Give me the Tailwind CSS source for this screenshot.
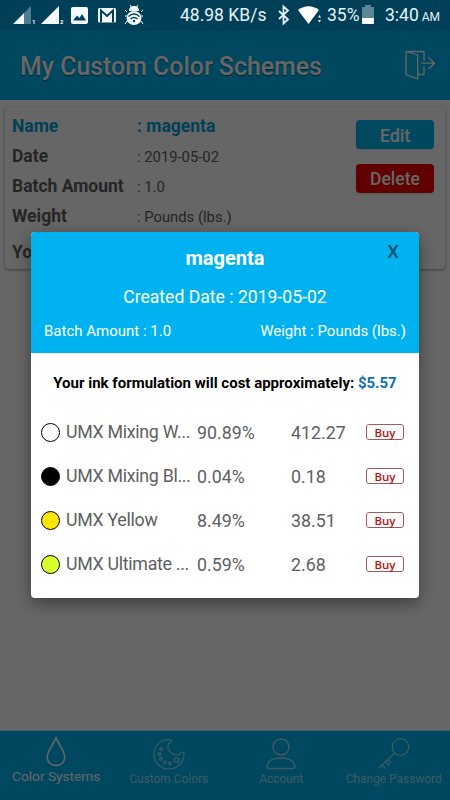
<!DOCTYPE html>
<html lang="en">
<head>
    <meta charset="UTF-8">
    <meta name="viewport" content="width=device-width, initial-scale=1.0">
    <title>My Custom Color Schemes</title>
    <script src="https://cdn.jsdelivr.net/npm/@tailwindcss/browser@4"></script>
</head>
<body class="font-[Roboto,sans-serif]">
    <div class="relative w-[450px] h-[800px] flex flex-col overflow-hidden bg-white whitespace-nowrap">
        <!-- Header -->
        <header class="h-[100px] pt-[32px] pl-5 pr-[14px] flex items-center justify-between bg-[#00b3f0] text-white">
            <h1 class="pt-[2px] text-[24.9px] leading-8 font-medium [text-shadow:0_1px_1px_#0008]">My Custom Color Schemes</h1>
            <svg class="w-8 h-8" viewBox="0 0 32 32" fill="none" stroke="currentColor" stroke-width="1.3" stroke-linejoin="round">
                <path d="M2 1.5H20V10.5M20 16.5V24.5H14M2 1.5V24.7L13.7 29V5L2 1.5M17 13.2H30.5M24.5 7.5L30.5 13.2L24.5 19" />
            </svg>
        </header>

        <!-- Scheme card -->
        <main class="flex-1 pt-[7px] px-[5px]">
            <div class="h-[162px] flex justify-between rounded-sm bg-white shadow-[0_1px_3px_#0006] pl-[7px] pr-[11px] pt-1 text-[#5c5c5c]">
                <div class="grid grid-cols-[125px_auto] auto-rows-[30px] items-center">
                    <span class="text-[17.5px] font-bold text-[#00a0d4]">Name</span>
                    <span class="text-[17.5px] font-bold text-[#00a0d4]">: magenta</span>
                    <span class="text-[17.5px] font-bold">Date</span>
                    <span class="pt-[3px] text-[14.8px]">: 2019-05-02</span>
                    <span class="text-[17.5px] font-bold">Batch Amount</span>
                    <span class="pt-[3px] text-[14.8px]">: 1.0</span>
                    <span class="text-[17.5px] font-bold">Weight</span>
                    <span class="pt-[3px] text-[14.8px]">: Pounds (lbs.)</span>
                    <span class="pt-[13px] text-[17.5px] font-bold">Your ink</span>
                </div>
                <div class="pt-[9px] flex flex-col gap-[15px]">
                    <button class="w-[78px] h-[29px] pt-[2px] rounded-sm bg-[#00b3f0] text-[18px] leading-[27px] font-medium text-white shadow-sm">Edit</button>
                    <button class="w-[78px] h-[29px] pt-[2px] rounded-sm bg-[#f00000] text-[17.6px] leading-[27px] font-medium text-white shadow-sm">Delete</button>
                </div>
            </div>
        </main>

        <!-- Bottom navigation -->
        <nav class="h-[70px] grid grid-cols-4 justify-items-center border-t border-[#bfe6f2] bg-[#00b3f0] text-white">
            <div class="flex flex-col items-center pt-1">
                <svg class="w-8 h-[33px]" viewBox="0 0 32 34" fill="none" stroke="currentColor" stroke-width="1.6">
                    <path d="M16 2C15 8 7 15.5 7 22.5C7 28 11 31.5 16 31.5S25 28 25 22.5C25 15.5 17 8 16 2Z" />
                </svg>
                <span class="text-[13.7px] leading-4">Color Systems</span>
            </div>
            <div class="flex flex-col items-center pt-1 text-white/60">
                <svg class="w-8 h-9" viewBox="0 0 32 36" fill="none" stroke="currentColor" stroke-width="1.2">
                    <path d="M18 5C8.5 3 1 10.5 1 19.5C1 28 8 34 16 34C25 34 31 27 31 18.5C31 16.5 28.5 16.5 27.5 18.5C24 21.5 17.5 19 15.5 14.5C14.3 11.5 15 8.5 17.8 7C19 6.3 19 5.2 18 5Z" />
                    <circle cx="8" cy="14" r="1.3" /><circle cx="6.5" cy="19" r="1.3" /><circle cx="8" cy="24" r="1.3" />
                    <circle cx="12" cy="27.5" r="1.3" /><circle cx="17" cy="28.5" r="1.3" /><circle cx="23.5" cy="25" r="2.4" />
                </svg>
                <span class="text-[11.9px] leading-4">Custom Colors</span>
            </div>
            <div class="flex flex-col items-center pt-1 text-white/60">
                <svg class="w-8 h-9" viewBox="0 0 32 36" fill="none" stroke="currentColor" stroke-width="1.4">
                    <circle cx="16" cy="12" r="8" />
                    <path d="M3.5 33.5H28.5Q30 33.5 29.8 31C29 25.500 23 23 16 23S3 25.500 2.2 31Q2 33.5 3.5 33.5Z" />
                </svg>
                <span class="text-[11.9px] leading-4">Account</span>
            </div>
            <div class="flex flex-col items-center pt-1 text-white/60">
                <svg class="w-8 h-9" viewBox="0 0 32 36" fill="none" stroke="currentColor" stroke-width="1.3">
                    <circle cx="22.5" cy="12" r="8.3" />
                    <path d="M16.5 18L1 33M4 30L7.5 33.5M7.5 26.5L11.5 30.5M9.5 24.5L13 28" />
                </svg>
                <span class="text-[11.9px] leading-4">Change Password</span>
            </div>
        </nav>

        <!-- Backdrop and dialog -->
        <div class="absolute inset-0 bg-black/60 pt-[232px] pl-[31px]">
            <div class="w-[388px] h-[366px] rounded-sm overflow-hidden bg-white shadow-[0_5px_16px_#0006] flex flex-col">
                <div class="relative h-[121px] bg-[#00b3f0] text-white">
                    <h2 class="pt-[14px] text-center text-[20px] leading-6 font-bold">magenta</h2>
                    <button class="absolute right-[20px] top-2 text-[18.5px] leading-6 font-medium text-[#005172]">X</button>
                    <p class="pt-[15px] text-center text-[17.6px] leading-6">Created Date : 2019-05-02</p>
                    <div class="flex justify-between pt-3 px-[13px] text-[15px] leading-5">
                        <span>Batch Amount : 1.0</span>
                        <span>Weight : Pounds (lbs.)</span>
                    </div>
                </div>
                <p class="pt-5 text-center text-[15px] leading-5 font-bold text-black">Your ink formulation will cost approximately: <span class="text-[#0a6ebd]">$5.57</span></p>
                <div class="pt-[17px] pl-[10px] pr-[15px] text-[17.8px] text-[#606060]">
                    <div class="h-11 grid grid-cols-[25px_131px_94px_1fr_38px] items-center">
                        <span class="w-[19px] h-[19px] rounded-full border-[1.5px] border-black bg-white"></span>
                        <span class="pt-px tracking-[-0.3px]">UMX Mixing W...</span><span class="pt-[2px]">90.89%</span><span class="pt-[2px]">412.27</span>
                        <button class="col-start-5 h-4 rounded-[3px] border border-[#a55a5a] font-['Open_Sans'] text-[11.5px] leading-[13px] font-semibold text-[#b80f0f]">Buy</button>
                    </div>
                    <div class="h-11 grid grid-cols-[25px_131px_94px_1fr_38px] items-center">
                        <span class="w-[19px] h-[19px] rounded-full border-[1.5px] border-black bg-black"></span>
                        <span class="pt-px tracking-[-0.3px]">UMX Mixing Bl...</span><span class="pt-[2px]">0.04%</span><span class="pt-[2px]">0.18</span>
                        <button class="col-start-5 h-4 rounded-[3px] border border-[#a55a5a] font-['Open_Sans'] text-[11.5px] leading-[13px] font-semibold text-[#b80f0f]">Buy</button>
                    </div>
                    <div class="h-11 grid grid-cols-[25px_131px_94px_1fr_38px] items-center">
                        <span class="w-[19px] h-[19px] rounded-full border-[1.5px] border-black bg-[#ffe600]"></span>
                        <span class="pt-px tracking-[-0.3px]">UMX Yellow</span><span class="pt-[2px]">8.49%</span><span class="pt-[2px]">38.51</span>
                        <button class="col-start-5 h-4 rounded-[3px] border border-[#a55a5a] font-['Open_Sans'] text-[11.5px] leading-[13px] font-semibold text-[#b80f0f]">Buy</button>
                    </div>
                    <div class="h-11 grid grid-cols-[25px_131px_94px_1fr_38px] items-center">
                        <span class="w-[19px] h-[19px] rounded-full border-[1.5px] border-black bg-[#d8ff2b]"></span>
                        <span class="pt-px tracking-[-0.3px]">UMX Ultimate ...</span><span class="pt-[2px]">0.59%</span><span class="pt-[2px]">2.68</span>
                        <button class="col-start-5 h-4 rounded-[3px] border border-[#a55a5a] font-['Open_Sans'] text-[11.5px] leading-[13px] font-semibold text-[#b80f0f]">Buy</button>
                    </div>
                </div>
            </div>
        </div>

        <!-- Status bar, above the backdrop -->
        <div class="absolute inset-x-0 top-0 h-[31px] flex items-center bg-[#003f58] pl-3 text-[18px] text-[#e4f2f8]">
            <svg class="w-[134px] h-[31px]" viewBox="12 0 134 31" fill="none">
                <path fill="#4b7c90" d="M24 13L31 6V24H24Z" />
                <path fill="#f4fbff" d="M13 24L24 13V24ZM41 24L59 6V24Z" />
                <text x="32" y="24" font-size="6" font-weight="700" fill="#fff">1</text>
                <text x="60" y="24" font-size="6" font-weight="700" fill="#fff">2</text>
                <rect x="71" y="7" width="17" height="17" rx="2" fill="#f4fbff" />
                <path fill="#003f58" d="M73 20.5L77 15.5L79.5 18L82 14L86 20.5Z" />
                <rect x="98" y="8" width="18" height="14.5" rx="1.5" fill="#f4fbff" />
                <path stroke="#003f58" stroke-width="2" d="M101 22.5V10.5L107 16L113 10.5V22.5" />
                <path stroke="#f4fbff" d="M130 5L132 8M138 5L136 8M127 12L125 10M141 12L143 10M127 16H125M141 16H143M127 21L125 24M141 21L143 24" />
                <path fill="#f4fbff" d="M129 11Q129 6 134 6T139 11Z" />
                <ellipse cx="134" cy="18" rx="7.5" ry="7" fill="#f4fbff" />
                <path stroke="#003f58" stroke-width="1.3" d="M128.500 16.5Q134 11.5 139.5 16.5M130.500 19Q134 16 137.5 19" />
                <circle cx="134" cy="21" r="1.2" fill="#003f58" />
            </svg>
            <span class="w-[131px] pl-[34px] text-[17.5px]">48.98 KB/s</span>
            <svg class="w-[49px] h-[31px]" viewBox="277 0 49 31" fill="none">
                <path stroke="#e4f2f8" stroke-width="1.8" d="M279 11L288 19.5L283.5 23.5V6.5L288 10.5L279 19" />
                <path fill="#fff" d="M298 10Q308.5 2.5 319 10L308.5 24Z" />
                <path fill="#fff" d="M318 17.5L319.5 15L321 17.5ZM318 20L319.5 22.5L321 20Z" />
            </svg>
            <span class="w-[36px] pl-[1px] text-[17.5px]">35%</span>
            <svg class="w-3 h-[31px]" viewBox="0 0 12 31">
                <path fill="#5b8798" d="M0 7H3V5H9V7H12V18H0Z" />
                <path fill="#fff" d="M0 18H12V23Q12 24 11 24H1Q0 24 0 23Z" />
            </svg>
            <div class="pl-[11px] flex items-baseline gap-[3px]"><span class="text-[17.5px]">3:40</span><span class="text-[12px]">AM</span></div>
        </div>
    </div>
</body>
</html>
